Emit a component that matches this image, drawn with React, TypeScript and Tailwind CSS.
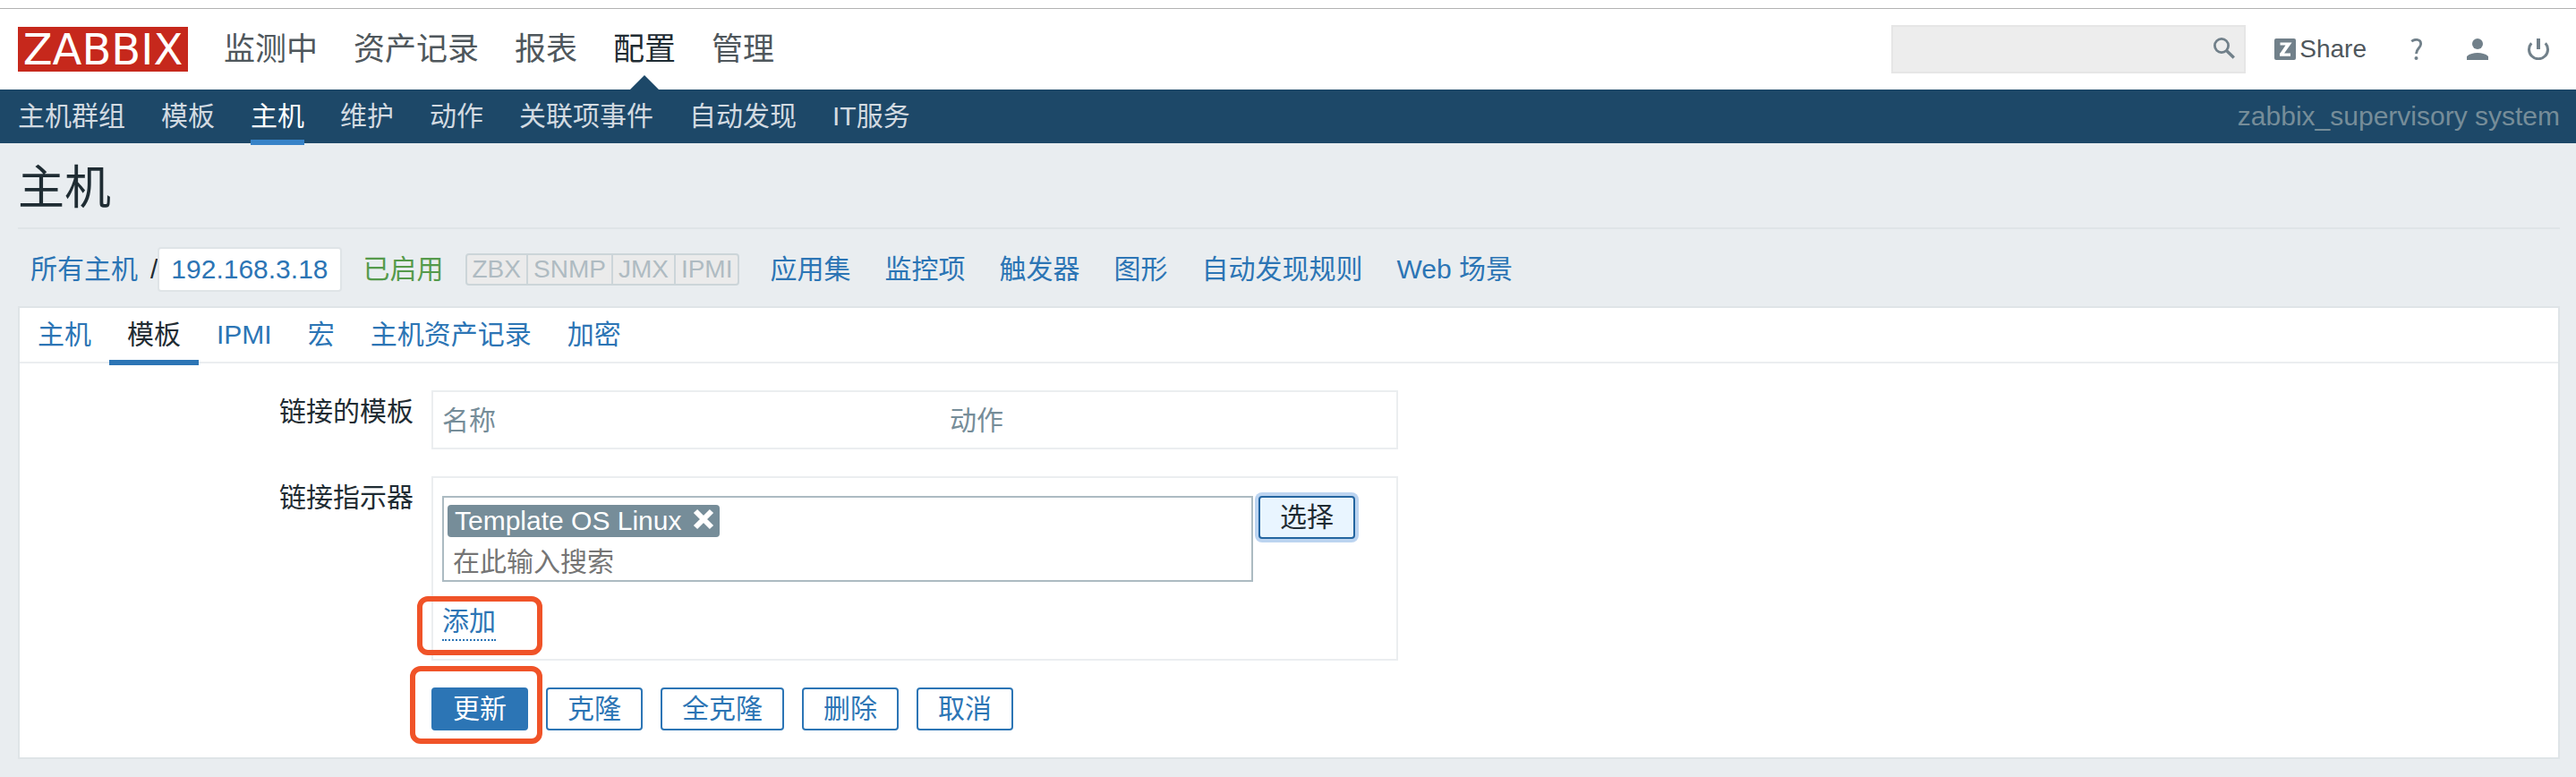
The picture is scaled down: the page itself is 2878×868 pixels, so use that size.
import React from "react";

const topMenu = ["监测中", "资产记录", "报表", "配置", "管理"];
const subMenu = ["主机群组", "模板", "主机", "维护", "动作", "关联项事件", "自动发现", "IT服务"];
const hostLinks = ["应用集", "监控项", "触发器", "图形", "自动发现规则", "Web 场景"];
const interfaces = ["ZBX", "SNMP", "JMX", "IPMI"];
const tabs = ["主机", "模板", "IPMI", "宏", "主机资产记录", "加密"];
const actions = ["更新", "克隆", "全克隆", "删除", "取消"];

function Header() {
  return (
    <header>
      <div className="flex h-[100px] items-center justify-between bg-white pt-2.5 pr-[30px] pl-5">
        <div className="flex items-center gap-10">
          <a
            href="#"
            className="flex h-[50px] w-[190px] items-center justify-center bg-[#c6281c] font-['DejaVu_Sans',sans-serif] text-[48px] leading-[50px] text-white"
          >
            ZABBIX
          </a>
          <nav className="flex gap-10 text-[35px] leading-[44px]">
            {topMenu.map((item) => (
              <a key={item} href="#" className={item === "配置" ? "relative text-[#1f2c33]" : "text-[#4f575c]"}>
                {item}
                {item === "配置" && (
                  <svg width="32" height="16" viewBox="0 0 32 16" className="absolute top-[51px] left-[19px]">
                    <path d="M0 16L16 0L32 16Z" fill="#1d4868" />
                  </svg>
                )}
              </a>
            ))}
          </nav>
        </div>
        <div className="flex items-center">
          <form className="relative">
            <input
              type="text"
              aria-label="搜索"
              className="block h-[54px] w-[396px] border-2 border-[#e6e6e6] bg-[#ededed] pr-12 pl-2 text-[28px] outline-none"
            />
            <button type="button" aria-label="搜索" className="absolute top-3.5 right-3">
              <svg width="24" height="24" viewBox="0 0 24 24" fill="none" stroke="#71808a">
                <circle cx="9" cy="9" r="7.6" strokeWidth="2.8" />
                <path d="M14.500 14.500L22.800 22.500" strokeWidth="3.400" />
              </svg>
            </button>
          </form>
          <a href="#" className="ml-8 flex items-center gap-1 text-[28px] leading-8 text-[#4f575c]">
            <svg width="24" height="24" viewBox="0 0 24 24">
              <rect width="24" height="24" rx="2" fill="#71808a" />
              <path d="M6.5 6H16.5L8 18M6 18.2H18M15.500 6L7.500 18" stroke="#fff" strokeWidth="3.2" fill="none" />
            </svg>
            Share
          </a>
          <a href="#" aria-label="帮助" className="ml-11">
            <svg width="24" height="24" viewBox="0 0 24 24" fill="none" stroke="#71808a" strokeWidth="2.8">
              <path d="M6.300 3.200C8.500 1.200 11 1.200 12.500 1.400C15.500 1.800 16.800 4 16.600 6.500C16.300 10.500 11.500 11.500 11.500 17" />
              <circle cx="11.500" cy="22" r="2" fill="#71808a" stroke="none" />
            </svg>
          </a>
          <a href="#" aria-label="用户" className="ml-11">
            <svg width="24" height="24" viewBox="0 0 24 24" fill="#71808a">
              <circle cx="12" cy="6" r="6" />
              <path d="M0 24V20C3 17 7.500 16 12 16S21 17 24 20V24Z" />
            </svg>
          </a>
          <a href="#" aria-label="退出" className="ml-11">
            <svg width="24" height="24" viewBox="0 0 24 24" fill="none" stroke="#71808a" strokeWidth="3">
              <path d="M4.200 5.200A10.500 10.500 0 1 0 19.800 5.200" />
              <path d="M12 0V12" strokeWidth="4" />
            </svg>
          </a>
        </div>
      </div>
      <div className="flex h-[60px] items-center justify-between bg-[#1d4868] pr-[18px] pl-5 text-[30px]">
        <nav className="flex h-full gap-10 leading-[60px]">
          {subMenu.map((item) => (
            <a
              key={item}
              href="#"
              className={item === "主机" ? "h-[62px] border-b-6 border-[#3783c8] text-white" : "text-[#d2dae1]"}
            >
              {item}
            </a>
          ))}
        </nav>
        <span className="text-[#768d99]">zabbix_supervisory system</span>
      </div>
    </header>
  );
}

function HostBar() {
  return (
    <div className="flex h-[86px] items-center pt-1 pl-3.5">
      <a href="#" className="text-[#2c75b5]">所有主机</a>
      <span className="ml-3.5">/</span>
      <a href="#" className="h-[50px] rounded-sm border-2 border-[#dfe4e7] bg-white px-[13px] leading-[46px] text-[#2c75b5]">
        192.168.3.18
      </a>
      <span className="ml-6 text-[#559a4b]">已启用</span>
      <div className="ml-6 flex h-9 rounded-sm border-2 border-[#ccd5d9] bg-[#ebebeb] text-[28px] leading-8 text-[#afbbc2]">
        {interfaces.map((name) => (
          <span key={name} className="border-[#ccd5d9] px-1.5 not-last:border-r-2">
            {name}
          </span>
        ))}
      </div>
      <nav className="ml-[34px] flex gap-[38px] text-[#2c75b5]">
        {hostLinks.map((item) => (
          <a key={item} href="#">{item}</a>
        ))}
      </nav>
    </div>
  );
}

function Tabs() {
  return (
    <nav className="flex h-[62px] border-b-2 border-[#ebeef0] leading-[60px]">
      {tabs.map((item) => (
        <a
          key={item}
          href="#"
          className={item === "模板" ? "h-16 border-b-6 border-[#2c75b5] px-5" : "px-5 text-[#2c75b5]"}
        >
          {item}
        </a>
      ))}
    </nav>
  );
}

export default function App() {
  return (
    <div className="min-h-screen bg-[#e9edf0] pb-5 font-['Liberation_Sans','Noto_Sans_CJK_SC',sans-serif] text-[30px] leading-9 text-[#1f2c33]">
      <div className="relative">
        <div className="absolute top-[9px] h-px w-full bg-[#b2b2b2]" />
        <Header />
      </div>
      <main className="pr-[18px] pl-5">
        <h1 className="h-24 border-b-2 border-[#dfe4e7] text-[52px] leading-[100px]">主机</h1>
        <HostBar />
        <div className="border-2 border-[#dfe4e7] bg-white">
          <Tabs />
          <form className="grid grid-cols-[440px_1fr] gap-x-5 py-[30px]">
            <span className="pt-1.5 text-right">链接的模板</span>
            <table className="w-[1080px] table-fixed border-2 border-[#ebeef0] text-left text-[#768d99]">
              <thead>
                <tr>
                  <th className="h-16 w-[568px] pt-0.5 pl-2.5 font-normal">名称</th>
                  <th className="pt-0.5 pl-2.5 font-normal">动作</th>
                </tr>
              </thead>
            </table>
            <label htmlFor="template-search" className="pt-9 text-right">链接指示器</label>
            <div className="mt-[30px] h-[206px] w-[1080px] border-2 border-[#ebeef0] pt-5 pl-2.5">
              <div className="flex items-start gap-1.5">
                <div className="h-24 w-[906px] border-2 border-[#acbbc2] bg-white px-1 pt-2">
                  <div className="flex h-9 w-[304px] items-center justify-between rounded-sm bg-[#768d99] pr-1.5 pl-2 text-white">
                    <span>Template OS Linux</span>
                    <button type="button" aria-label="移除" className="pb-1">
                      <svg width="24" height="24" viewBox="0 0 24 24" className="block" stroke="#fff" strokeWidth="6">
                        <path d="M3 3L21 21M21 3L3 21" />
                      </svg>
                    </button>
                  </div>
                  <input
                    id="template-search"
                    type="text"
                    placeholder="在此输入搜索"
                    className="mt-2 block h-10 w-full px-1.5 outline-none placeholder:text-[#757575]"
                  />
                </div>
                <button
                  type="button"
                  className="h-12 rounded-sm border-2 border-[#2465a0] bg-[#e9f5ff] px-[22px] leading-[42px] ring-4 ring-[#bcd4f0]"
                >
                  选择
                </button>
              </div>
              <div className="relative mt-6 w-fit">
                <button type="button" className="block h-[42px] border-b-2 border-dotted border-[#2c75b5] text-[#2c75b5]">
                  添加
                </button>
                <div className="pointer-events-none absolute -top-2 -left-7 h-[66px] w-[140px] rounded-xl border-6 border-[#f05328]" />
              </div>
            </div>
            <div className="relative col-start-2 mt-[30px] flex gap-5">
              {actions.map((item) => (
                <button
                  key={item}
                  type="button"
                  className={
                    item === "更新"
                      ? "h-12 rounded-sm border-2 border-[#2c75b5] bg-[#2c75b5] px-[22px] leading-[42px] text-white"
                      : "h-12 rounded-sm border-2 border-[#2c75b5] bg-white px-[22px] leading-[42px] text-[#2c75b5]"
                  }
                >
                  {item}
                </button>
              ))}
              <div className="pointer-events-none absolute -top-6 -left-6 h-[87px] w-[148px] rounded-xl border-6 border-[#f05328]" />
            </div>
          </form>
        </div>
      </main>
    </div>
  );
}
